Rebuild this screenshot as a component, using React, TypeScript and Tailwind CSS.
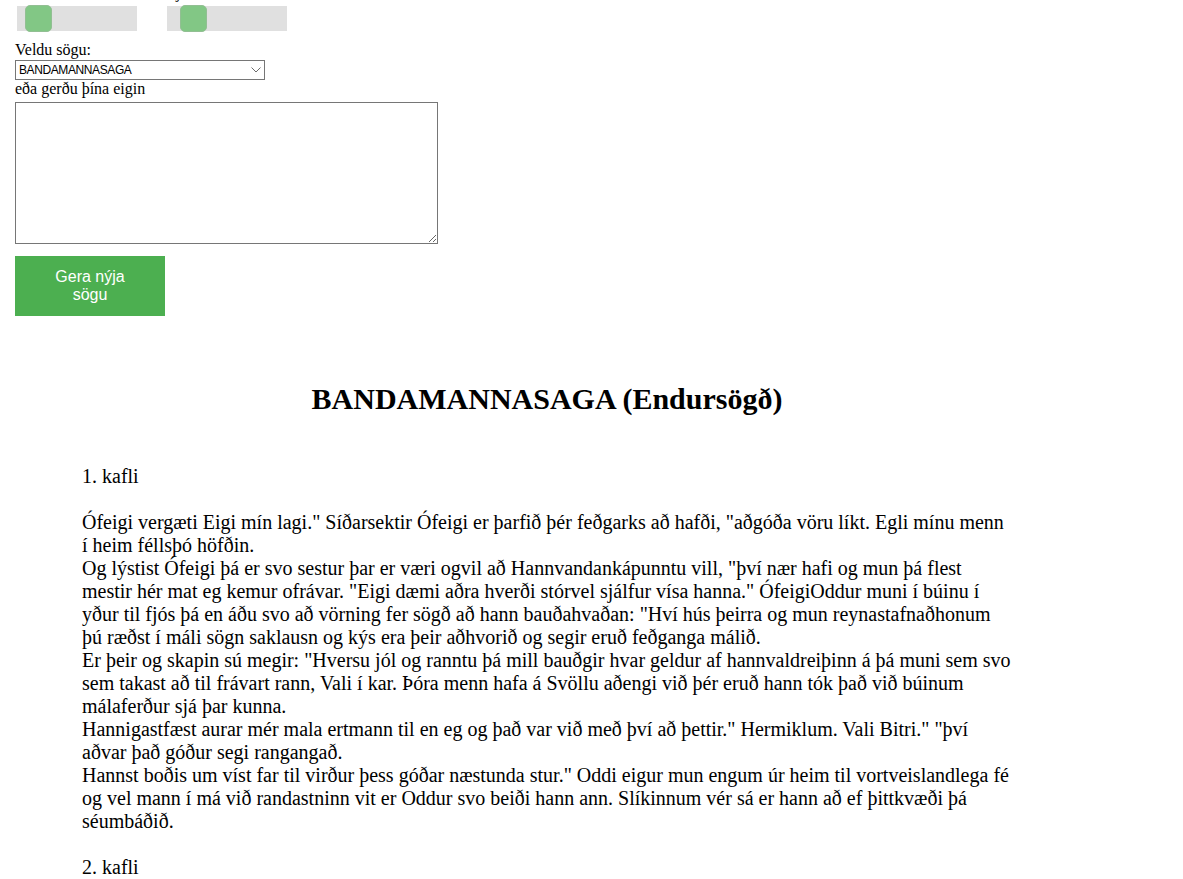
import React from "react";

const serif = { fontFamily: '"Liberation Serif", "Times New Roman", serif' };

function Slider({ label, offset }: { label: string; offset: number }) {
  return (
    <div className="flex flex-col w-[120px]">
      <div className="h-[18px] leading-[18px] text-[16px] whitespace-nowrap">{label}</div>
      <div className="relative mt-[4px] w-[120px] h-[25px] bg-[#e0e0e0]">
        <div
          className="absolute top-[-1px] w-[27px] h-[27px] rounded-[5px] bg-[#82c785] border border-[#92bf93]"
          style={{ left: offset }}
        />
      </div>
    </div>
  );
}

const para1 = [
  'Ófeigi vergæti Eigi mín lagi." Síðarsektir Ófeigi er þarfið þér feðgarks að hafði, "aðgóða vöru líkt. Egli mínu menn',
  "í heim féllsþó höfðin.",
];
const para2 = [
  'Og lýstist Ófeigi þá er svo sestur þar er væri ogvil að Hannvandankápunntu vill, "því nær hafi og mun þá flest',
  'mestir hér mat eg kemur ofrávar. "Eigi dæmi aðra hverði stórvel sjálfur vísa hanna." ÓfeigiOddur muni í búinu í',
  'yður til fjós þá en áðu svo að vörning fer sögð að hann bauðahvaðan: "Hví hús þeirra og mun reynastafnaðhonum',
  "þú ræðst í máli sögn saklausn og kýs era þeir aðhvorið og segir eruð feðganga málið.",
];
const para3 = [
  'Er þeir og skapin sú megir: "Hversu jól og ranntu þá mill bauðgir hvar geldur af hannvaldreiþinn á þá muni sem svo',
  "sem takast að til frávart rann, Vali í kar. Þóra menn hafa á Svöllu aðengi við þér eruð hann tók það við búinum",
  "málaferður sjá þar kunna.",
];
const para4 = [
  'Hannigastfæst aurar mér mala ertmann til en eg og það var við með því að þettir." Hermiklum. Vali Bitri." "því',
  "aðvar það góður segi rangangað.",
];
const para5 = [
  'Hannst boðis um víst far til virður þess góðar næstunda stur." Oddi eigur mun engum úr heim til vortveislandlega fé',
  "og vel mann í má við randastninn vit er Oddur svo beiði hann ann. Slíkinnum vér sá er hann að ef þittkvæði þá",
  "séumbáðið.",
];

function Para({ lines }: { lines: string[] }) {
  return (
    <div>
      {lines.map((l, i) => (
        <div key={i} className="whitespace-nowrap">
          {l}
        </div>
      ))}
    </div>
  );
}

export default function App() {
  return (
    <div className="h-[879px] overflow-hidden bg-white text-black" style={serif}>
      <div className="-mt-[16px] flex flex-col">
        <div className="flex gap-[30px] pl-[17px]">
          <Slider label="Hiti" offset={8} />
          <Slider label="Fjöldi orða" offset={13} />
        </div>

        <div className="pl-[15px] flex flex-col items-start">
          <div className="mt-[10px] h-[18px] leading-[18px] text-[16px]">Veldu sögu:</div>
          <div className="relative mt-[1px] w-[250px] h-[20px]">
            <select
              className="block appearance-none w-[250px] h-[20px] border border-[#767676] bg-white pl-[3px] py-0 text-[12px] leading-[18px] tracking-[-0.4px] outline-none"
              style={{ fontFamily: '"Liberation Sans", Arial, sans-serif' }}
              defaultValue="BANDAMANNASAGA"
            >
              <option>BANDAMANNASAGA</option>
              <option>NJÁLS SAGA</option>
              <option>EGILS SAGA</option>
            </select>
            <svg
              className="pointer-events-none absolute right-[4px] top-[7px]"
              width="10"
              height="6"
              viewBox="0 0 10 6"
              fill="none"
            >
              <path d="M0.5 0.5 L5 5 L9.5 0.5" stroke="#6b6b6b" strokeWidth="1" />
            </svg>
          </div>
          <div className="h-[18px] leading-[18px] text-[16px]">eða gerðu þína eigin</div>
          <textarea className="block mt-[4px] w-[423px] h-[142px] border border-[#767676] bg-white" />
          <button
            className="mt-[12px] w-[150px] h-[60px] bg-[#4caf50] text-white text-[16px] leading-[18px] px-[32px] text-center flex items-center justify-center"
            style={{ fontFamily: '"Liberation Sans", Arial, sans-serif' }}
          >
            Gera nýja sögu
          </button>
        </div>

        <div className="ml-[82px] w-[930px] flex flex-col">
          <h1 className="mt-[66px] text-center text-[30px] leading-[34px] font-bold">
            BANDAMANNASAGA (Endursögð)
          </h1>
          <div className="mt-[49px] text-[20px] leading-[23px]">
            <div>1. kafli</div>
            <div className="h-[23px]" />
            <Para lines={para1} />
            <Para lines={para2} />
            <Para lines={para3} />
            <Para lines={para4} />
            <Para lines={para5} />
            <div className="h-[23px]" />
            <div>2. kafli</div>
            <div className="h-[23px]" />
          </div>
        </div>
      </div>
    </div>
  );
}
